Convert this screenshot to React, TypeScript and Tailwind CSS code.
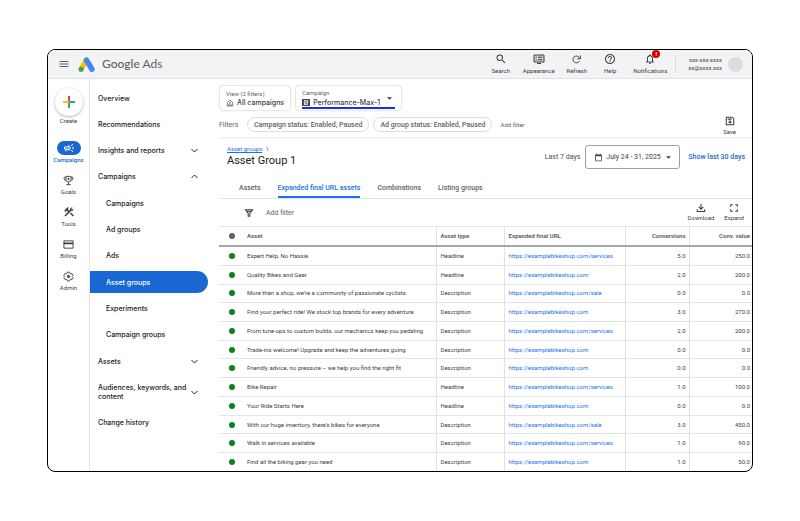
import React from "react";
import { MdConstruction, MdHelpOutline, MdMenu, MdNotificationsNone, MdOutlineCampaign, MdSearch } from "react-icons/md";

type IconProps = { className?: string };

const line = {
  fill: "none",
  stroke: "currentColor",
  strokeWidth: 2,
  viewBox: "0 0 24 24",
  "aria-hidden": true,
} as const;

const MonitorIcon = ({ className }: IconProps) => (
  <svg {...line} className={className}>
    <path d="M2 4h20v14H2z" fill="#cfd1d4" />
    <path d="M8 21h8M5.500 8.500h2M10 8.500h8.500M5.500 13.500h2M10 13.500h8.500" />
  </svg>
);
const RefreshIcon = ({ className }: IconProps) => (
  <svg {...line} className={className}>
    <path d="M18.500 15.500A7.500 7.500 0 1 1 18 7.500l2 2.500M20.500 3v7.500H13.500" />
  </svg>
);
const TrophyIcon = ({ className }: IconProps) => (
  <svg {...line} className={className}>
    <path d="M6.500 3h11v7a5.500 5.500 0 0 1-11 0zM6.500 5H2.500v2.500a4 4 0 0 0 4 4M17.500 5h4v2.500a4 4 0 0 1-4 4M12 15.500V21M7 21h10" />
    <path d="M12 6v5M9.500 8.500h5" />
  </svg>
);
const CardIcon = ({ className }: IconProps) => (
  <svg {...line} className={className}>
    <path d="M2 4h20v16H2z" />
    <path d="M2 9.500h20" strokeWidth="3.500" />
  </svg>
);
const GearIcon = ({ className }: IconProps) => (
  <svg {...line} className={className}>
    <path
      d="M9.500 2.500h5l.8 2.800 1.700 1 2.800-.7 2.500 4.200-2 2.200 2 2.200-2.500 4.200-2.800-.7-1.700 1-.8 2.800h-5l-.8-2.800-1.700-1-2.800.7-2.500-4.200 2-2.200-2-2.200 2.500-4.200 2.800.7 1.700-1z"
      strokeLinejoin="round"
    />
    <circle cx="12" cy="12" r="2.500" fill="currentColor" />
  </svg>
);
const HomeIcon = ({ className }: IconProps) => (
  <svg {...line} className={className}>
    <path d="M4 10.500 12 3l8 7.500V21H4z" strokeLinejoin="round" />
    <path d="M9 21v-4a3 3 0 0 1 6 0v4" />
    <circle cx="12" cy="11" r="1" />
  </svg>
);
const PerformanceIcon = ({ className }: IconProps) => (
  <svg viewBox="0 0 26 22" className={className} aria-hidden="true">
    <rect width="26" height="22" rx="2" fill="#3c4043" />
    <path d="M6 4h14v14H6z" fill="#fff" />
    <circle cx="12.500" cy="10.500" r="3.500" fill="none" stroke="#3c4043" strokeWidth="2.500" />
    <path d="m15 13 4 4" stroke="#3c4043" strokeWidth="2.500" />
  </svg>
);
const SaveIcon = ({ className }: IconProps) => (
  <svg {...line} strokeWidth={2.5} className={className}>
    <path d="M3 3h14.500L21 6.500V21H3z" strokeLinejoin="round" />
    <path d="M6.500 7.500H16M12 10v6.500M8.500 13.500 12 17l3.500-3.500" />
  </svg>
);
const CalendarIcon = ({ className }: IconProps) => (
  <svg {...line} className={className}>
    <path d="M4 5h16v16H4z" strokeLinejoin="round" />
    <path d="M4 7h16" strokeWidth="3" />
    <path d="M7.500 1.500V5M16.500 1.500V5" strokeWidth="2.500" />
  </svg>
);
const FunnelIcon = ({ className }: IconProps) => (
  <svg {...line} strokeWidth={2.5} className={className}>
    <path d="M3.500 4h17L14 12.500V20h-4v-7.500zM7 8h10" />
  </svg>
);
const DownloadIcon = ({ className }: IconProps) => (
  <svg {...line} strokeWidth={2.5} className={className}>
    <path d="M12 2v12M6.500 9.500 12 15l5.500-5.500M3 15v5.500h18V15" />
  </svg>
);
const ExpandIcon = ({ className }: IconProps) => (
  <svg {...line} strokeWidth={2.5} className={className}>
    <path d="M4 9V4h5M15 4h5v5M20 15v5h-5M9 20H4v-5" />
  </svg>
);
const Chevron = ({ up }: { up?: boolean }) => (
  <svg {...line} viewBox="0 0 14 10" className="h-[5px] w-[7px] shrink-0">
    <path d={up ? "M1 8l6-6 6 6" : "M1 2l6 6 6-6"} />
  </svg>
);
const Caret = ({ className = "" }: IconProps) => (
  <svg viewBox="0 0 10 5" className={`h-[3px] w-[5px] shrink-0 fill-[#3c4043] ${className}`} aria-hidden="true">
    <path d="M0 0h10L5 5z" />
  </svg>
);
const Logo = () => (
  <svg viewBox="0 0 50 44" className="h-[15px] w-[17px]" aria-hidden="true">
    <path d="M25 8 9 36" stroke="#fbbc04" strokeWidth="15" />
    <path d="M25 9l16 27" stroke="#4285f4" strokeWidth="16" strokeLinecap="round" />
    <circle cx="9" cy="36" r="7.500" fill="#34a853" />
  </svg>
);

const topActions = [
  { label: "Search", icon: <MdSearch className="size-3" />, width: "w-[23px]" },
  { label: "Appearance", icon: <MonitorIcon className="size-3" />, width: "w-[45px]" },
  { label: "Refresh", icon: <RefreshIcon className="size-[11px]" />, width: "w-[23px]" },
  { label: "Help", icon: <MdHelpOutline className="size-3" />, width: "w-9" },
];

const rail = [
  { label: "Goals", icon: <TrophyIcon className="size-[11px]" /> },
  { label: "Tools", icon: <MdConstruction className="size-3" /> },
  { label: "Billing", icon: <CardIcon className="size-[11px]" /> },
  { label: "Admin", icon: <GearIcon className="size-[11px]" /> },
];

type NavItem = { label: string; sub?: boolean; active?: boolean; open?: boolean; group?: boolean };
const nav: NavItem[] = [
  { label: "Overview" },
  { label: "Recommendations" },
  { label: "Insights and reports", group: true },
  { label: "Campaigns", group: true, open: true },
  { label: "Campaigns", sub: true },
  { label: "Ad groups", sub: true },
  { label: "Ads", sub: true },
  { label: "Asset groups", sub: true, active: true },
  { label: "Experiments", sub: true },
  { label: "Campaign groups", sub: true },
  { label: "Assets", group: true },
  { label: "Audiences, keywords, and content", group: true },
  { label: "Change history" },
];

const site = "https://examplebikeshop.com";
const rows = [
  ["Expert Help, No Hassle", "Headline", `${site}/services`, "5.0", "250.0"],
  ["Quality Bikes and Gear", "Headline", site, "2.0", "200.0"],
  ["More than a shop, we’re a community of passionate cyclists", "Description", `${site}/sale`, "0.0", "0.0"],
  ["Find your perfect ride! We stock top brands for every adventure", "Description", site, "3.0", "270.0"],
  ["From tune-ups to custom builds, our mechanics keep you pedaling", "Description", `${site}/services`, "2.0", "200.0"],
  ["Trade-ins welcome! Upgrade and keep the adventures going", "Description", site, "0.0", "0.0"],
  ["Friendly advice, no pressure – we help you find the right fit", "Description", site, "0.0", "0.0"],
  ["Bike Repair", "Headline", `${site}/services`, "1.0", "100.0"],
  ["Your Ride Starts Here", "Headline", site, "0.0", "0.0"],
  ["With our huge inventory, there’s bikes for everyone", "Description", `${site}/sale`, "3.0", "450.0"],
  ["Walk in services available", "Description", `${site}/services`, "1.0", "90.0"],
  ["Find all the biking gear you need", "Description", site, "1.0", "50.0"],
];

function Header() {
  return (
    <header className="flex h-[29px] shrink-0 items-center border-b border-[#e0e2e5] bg-[#f1f3f4] pl-[10px] pr-[9px]">
      <button aria-label="Main menu">
        <MdMenu className="size-3 text-[#5f6368]" />
      </button>
      <div className="ml-2 flex items-center gap-[7px]">
        <Logo />
        <span className="font-['Lato',sans-serif] text-[12px] leading-4 text-[#5f6368]">
          <b className="font-medium">Google</b> Ads
        </span>
      </div>
      <div className="ml-auto flex gap-1">
        {topActions.map((a) => (
          <button key={a.label} className={`flex flex-col items-center gap-0.5 ${a.width}`}>
            <span className="flex h-3 items-center">{a.icon}</span>
            <span className="text-[6px] leading-2">{a.label}</span>
          </button>
        ))}
        <button className="relative flex w-9 flex-col items-center gap-0.5">
          <MdNotificationsNone className="size-3" />
          <span className="text-[6px] leading-2">Notifications</span>
          <span className="absolute -top-[3px] left-5 size-2 rounded-full bg-[#d50000] text-center text-[6px] font-bold leading-2 text-white">
            !
          </span>
        </button>
      </div>
      <div className="ml-[7px] flex items-center gap-1.5 border-l border-[#dadce0] py-px pl-3">
        <div className="text-right text-[6px] leading-2">
          <div>xxx-xxx-xxxx</div>
          <div>xx@xxxx.xxx</div>
        </div>
        <span className="size-[15px] rounded-full bg-[#dadce0]" />
      </div>
    </header>
  );
}

function Rail() {
  return (
    <nav
      aria-label="Sections"
      className="flex w-[42px] shrink-0 flex-col items-center border-r border-[#e3e5e8] pt-[9px] text-[6px] leading-2"
    >
      <button className="flex flex-col items-center gap-px">
        <span className="flex size-7 items-center justify-center rounded-full bg-white shadow-[0_1px_3px_rgba(60,64,67,0.4)]">
          <svg viewBox="0 0 12 12" className="size-3" fill="none" strokeWidth="2" aria-hidden="true">
            <path d="M6 0v5" stroke="#ea4335" />
            <path d="M6 7v5" stroke="#34a853" />
            <path d="M0 6h7" stroke="#fbbc04" />
            <path d="M7 6h5M6 6h1" stroke="#4285f4" />
          </svg>
        </span>
        <span>Create</span>
      </button>
      <button className="mt-4 flex flex-col items-center gap-px text-[#1967d2]">
        <span className="flex h-[14px] w-6 items-center justify-center rounded-full bg-[#1967d2] text-white">
          <MdOutlineCampaign className="size-3 stroke-current" />
        </span>
        <span className="font-medium">Campaigns</span>
      </button>
      <div className="mt-[10px] flex flex-col gap-[10px]">
        {rail.map((r) => (
          <button key={r.label} className="flex flex-col items-center gap-0.5">
            <span className="flex h-3 items-center">{r.icon}</span>
            <span>{r.label}</span>
          </button>
        ))}
      </div>
    </nav>
  );
}

function SideNav() {
  return (
    <nav
      aria-label="Campaign pages"
      className="flex h-[355px] w-[129px] shrink-0 flex-col justify-between pr-[11px] pt-2 font-['Inter',sans-serif] text-[7px] font-medium leading-[9px] text-[#202124]"
    >
      {nav.map((n, i) => (
        <a
          key={i}
          href="#"
          className={`flex items-center justify-between rounded-r-full pr-[10px] ${n.sub ? "pl-4" : "pl-2"} ${
            n.active ? "bg-[#1967d2] text-white" : ""
          } ${n.label.length > 24 ? "h-[31px]" : "h-[22px]"}`}
        >
          <span className={n.group ? "w-[90px]" : ""}>{n.label}</span>
          {n.group && <Chevron up={n.open} />}
        </a>
      ))}
    </nav>
  );
}

function Filters() {
  return (
    <section className="flex items-end justify-between border-b-2 border-[#f1f3f4] pb-[5px] pr-4 pt-[7px]">
      <div>
        <div className="flex gap-1.5 pl-px text-[#5f6368]">
          <button className="h-6 rounded-[3px] px-1.5 text-left shadow-[0_0_2px_rgba(60,64,67,0.45)]">
            <span className="block text-[6px] leading-[9px]">View (2 filters)</span>
            <span className="flex items-center gap-[3px] font-['Inter',sans-serif] text-[7px] font-medium leading-[9px] text-[#3c4043]">
              <HomeIcon className="size-2" />
              All campaigns
            </span>
          </button>
          <div className="relative h-6 w-[105px] rounded-[3px] px-1.5 pt-[3px] shadow-[0_0_2px_rgba(60,64,67,0.45)]">
            <label htmlFor="campaign" className="block text-[6px] leading-2">
              Campaign
            </label>
            <div className="flex h-3 items-center gap-[3px] border-b-2 border-[#1a2ee8]">
              <PerformanceIcon className="h-[7px] w-2 shrink-0" />
              <select
                id="campaign"
                className="min-w-0 flex-1 appearance-none font-['Inter',sans-serif] text-[7px] font-medium leading-[9px] text-[#3c4043]"
              >
                <option>Performance-Max-1</option>
              </select>
            </div>
            <Caret className="absolute right-[9px] top-[11px]" />
          </div>
        </div>
        <div className="mt-[7px] flex items-center text-[7px] leading-2 text-[#5f6368]">
          <span className="w-7">Filters</span>
          <button className="h-[15px] rounded-full border border-[#dadce0] px-1.5 font-medium">
            Campaign status: Enabled, Paused
          </button>
          <button className="ml-1 h-[15px] rounded-full border border-[#dadce0] px-1.5 font-medium">
            Ad group status: Enabled, Paused
          </button>
          <button className="ml-2 text-[6px]">Add filter</button>
        </div>
      </div>
      <button className="-mb-1 flex flex-col items-center text-[6px] leading-2">
        <SaveIcon className="mb-0.5 size-[10px]" />
        Save
      </button>
    </section>
  );
}

function Title() {
  return (
    <section className="flex h-[39px] items-start justify-between pl-2 pr-[7px] pt-1.5">
      <div>
        <a href="#" className="flex items-center gap-1 text-[6px] leading-2 text-[#1a73e8]">
          <span className="underline">Asset groups</span>
          <svg {...line} viewBox="0 0 6 10" className="h-1 w-[3px]">
            <path d="m1 1 4 4-4 4" />
          </svg>
        </a>
        <h1 className="text-[11px] leading-[15px] text-[#202124]">Asset Group 1</h1>
      </div>
      <div className="flex items-center text-[7px] leading-2">
        <span className="text-[#4a4e52]">Last 7 days</span>
        <button className="ml-[5px] flex h-6 w-[95px] items-center rounded-[3px] border border-[#9aa0a6] pl-2">
          <CalendarIcon className="mr-[3px] size-[9px]" />
          <span>July 24 - 31, 2025</span>
          <Caret className="ml-[5px]" />
        </button>
        <a href="#" className="ml-2 font-medium text-[#1967d2]">
          Show last 30 days
        </a>
      </div>
    </section>
  );
}

function Tabs() {
  const tabs = ["Assets", "Expanded final URL assets", "Combinations", "Listing groups"];
  return (
    <div
      role="tablist"
      className="flex h-[21px] gap-[17px] border-b border-[#e3e5e8] pl-5 text-[7px] font-medium leading-5 text-[#5f6368]"
    >
      {tabs.map((t, i) => (
        <button
          key={t}
          role="tab"
          aria-selected={i === 1}
          className={i === 1 ? "border-b-2 border-[#1a73e8] text-[#1a73e8]" : "border-b-2 border-transparent"}
        >
          {t}
        </button>
      ))}
    </div>
  );
}

function Toolbar() {
  return (
    <div className="flex h-[27px] items-center pl-[25px] pr-2">
      <FunnelIcon className="size-[10px]" />
      <button className="ml-3 text-[7px] leading-2 text-[#5f6368]">Add filter</button>
      <div className="ml-auto flex gap-2.5 text-[6px] leading-2">
        <button className="flex flex-col items-center gap-px">
          <DownloadIcon className="size-[10px]" />
          Download
        </button>
        <button className="flex flex-col items-center gap-px">
          <ExpandIcon className="size-[10px]" />
          Expand
        </button>
      </div>
    </div>
  );
}

function AssetTable() {
  return (
    <table className="h-[246px] w-full table-fixed border-collapse text-left text-[6px] leading-2 text-[#3c4043]">
      <colgroup>
        <col className="w-7" />
        <col />
        <col className="w-[68px]" />
        <col className="w-[121px]" />
        <col className="w-16" />
        <col className="w-[63px]" />
      </colgroup>
      <thead>
        <tr className="h-[19px] border-b-2 border-t border-b-[#a5a8ab] border-t-[#e3e5e8] text-[#5f6368] [&>th]:font-bold">
          <th>
            <span className="ml-2.5 block size-1.5 rounded-full bg-[#5f6368]" />
          </th>
          <th>Asset</th>
          <th className="border-l border-[#dfe1e5] pl-1">Asset type</th>
          <th className="border-l border-[#dfe1e5] pl-1">Expanded final URL</th>
          <th className="border-l border-[#dfe1e5] pr-[3px] text-right">Conversions</th>
          <th className="border-l border-[#dfe1e5] pr-0.5 text-right">Conv. value</th>
        </tr>
      </thead>
      <tbody>
        {rows.map(([asset, type, url, conv, value]) => (
          <tr key={asset} className="border-b border-[#e3e5e8]">
            <td>
              <span className="ml-2.5 block size-1.5 rounded-full bg-[#0b8021]" />
            </td>
            <td className="whitespace-nowrap">{asset}</td>
            <td className="border-l border-[#dfe1e5] pl-1">{type}</td>
            <td className="border-l border-[#dfe1e5] pl-1">
              <a href="#" className="text-[#1a73e8]">
                {url}
              </a>
            </td>
            <td className="border-l border-[#dfe1e5] pr-[3px] text-right">{conv}</td>
            <td className="border-l border-[#dfe1e5] pr-0.5 text-right">{value}</td>
          </tr>
        ))}
      </tbody>
    </table>
  );
}

export default function App() {
  return (
    <div className="flex h-screen flex-col bg-white px-[47px] py-[49px] font-['Roboto',sans-serif] text-[#3c4043]">
      <div className="flex min-h-0 flex-1 flex-col overflow-hidden rounded-lg border border-black">
        <Header />
        <div className="flex min-h-0 flex-1">
          <Rail />
          <SideNav />
          <main className="min-w-0 flex-1">
            <Filters />
            <Title />
            <Tabs />
            <Toolbar />
            <AssetTable />
          </main>
        </div>
      </div>
    </div>
  );
}
